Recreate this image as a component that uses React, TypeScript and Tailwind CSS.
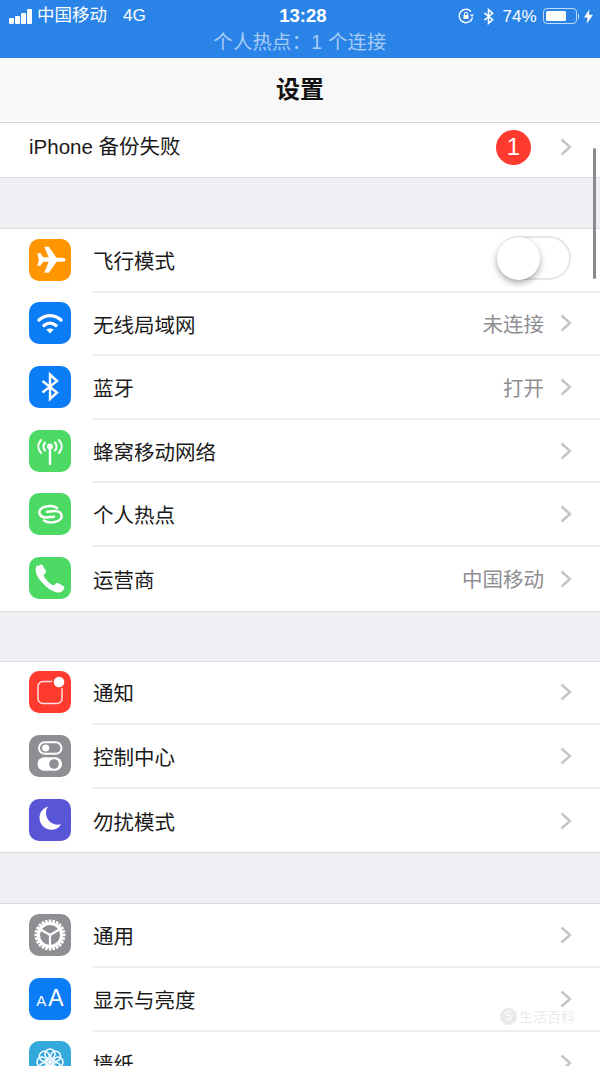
import React from 'react';

const FONT = "font-['Liberation_Sans','Noto_Sans_CJK_SC',sans-serif]";

const Chevron = () => (
  <svg viewBox="0 0 12 18" className="w-[12px] h-[18px] shrink-0" fill="none" stroke="#c4c4c7" strokeWidth="2.400">
    <path d="M1.500 1.500L10 9l-8.500 7.500" />
  </svg>
);

const Plane = () => (
  <svg viewBox="0 0 42 42" className="w-[42px] h-[42px]">
    <path
      fill="#fff"
      d="M8.300 14.300h3l3 4h5.400L15.300 7.700h4.600l7.600 11h5.500c2.200 0 3.500.9 3.500 2s-1.300 2-3.500 2h-5.500l-7.600 11h-4.600l4.400-11h-5.400l-3 4h-3l1.500-6z"
    />
  </svg>
);

const Wifi = () => (
  <svg viewBox="0 0 42 42" className="w-[42px] h-[42px]" fill="none" stroke="#fff" strokeLinecap="round">
    <path strokeWidth="3.400" d="M10 18c6.500-5.800 15.500-5.800 22 0" />
    <path strokeWidth="3.400" d="M15 23.500c3.600-3.100 8.400-3.100 12 0" />
    <path fill="#fff" stroke="none" d="M17.300 27.500c2.200-1.500 5.200-1.500 7.400 0L21 31.500z" />
  </svg>
);

const Bluetooth = () => (
  <svg viewBox="0 0 42 42" className="w-[42px] h-[42px]" fill="none" stroke="#fff" strokeWidth="2.400">
    <path d="M13.500 15l14.500 11.500-7 6.500V8.500l7 6.500-14.500 11.500" />
  </svg>
);

const Antenna = () => (
  <svg viewBox="0 0 42 42" className="w-[42px] h-[42px]" fill="none" stroke="#fff" strokeWidth="2.100" strokeLinecap="round">
    <circle cx="21" cy="16.500" r="3" fill="#fff" stroke="none" />
    <path strokeWidth="2.400" d="M21 18v16" />
    <path d="M16 12.500c-2 2.500-2 5.500 0 8M26 12.500c2 2.500 2 5.500 0 8" />
    <path d="M12 10c-3.500 4-3.500 9 0 13M30 10c3.500 4 3.500 9 0 13" />
  </svg>
);

const Hotspot = () => (
  <svg viewBox="0 0 42 42" className="w-[42px] h-[42px]" fill="none" stroke="#fff" strokeWidth="2.500" strokeLinecap="round">
    <path d="M28 15c-3-2.200-7-2.300-11-1.400-5 1-7.300 3.800-6.500 6.800.9 3.400 5 4.400 9 3.900l5.500-.6" />
    <path d="M15 27.500c3 2.200 7 2.300 11 1.400 5-1 7.300-3.800 6.500-6.800-.9-3.400-5-4.400-9-3.900l-5.500.6" />
  </svg>
);

const Phone = () => (
  <svg viewBox="0 0 42 42" className="w-[42px] h-[42px]">
    <path
      fill="#fff"
      d="M9 9.500c1.500-1.500 3.500-2.500 4.500-1.500l3.500 6c.5 1-.5 2-1.500 3-1 1-.8 2 .2 3.500 1.500 2.500 4 5 6.800 7 1.500 1 2.500 1 3.500 0 1-1 2-2 3-1.500l6 3.500c1 1 0 3-1.500 4.500-2 2-5 2-8.500.5-4-1.700-8-4.500-11-8-3.500-3.500-6-7-7-11-.8-3-.5-5.500 1.500-7.500z"
    />
  </svg>
);

const Notify = () => (
  <svg viewBox="0 0 42 42" className="w-[42px] h-[42px]">
    <rect x="9" y="10.500" width="24" height="22" rx="5" fill="none" stroke="#fff" strokeOpacity="0.85" strokeWidth="1.500" />
    <circle cx="30" cy="11" r="7" fill="#ff3b30" />
    <circle cx="30" cy="11" r="5.300" fill="#fff" />
  </svg>
);

const Toggles = () => (
  <svg viewBox="0 0 42 42" className="w-[42px] h-[42px]">
    <rect x="10" y="7.300" width="22.500" height="11.500" rx="5.750" fill="none" stroke="#fff" strokeWidth="2" />
    <circle cx="16.700" cy="13" r="3.600" fill="#fff" />
    <rect x="8.500" y="22.300" width="24.500" height="13.400" rx="6.700" fill="#fff" />
    <circle cx="25" cy="29" r="4.800" fill="#8e8e93" />
  </svg>
);

const Moon = () => (
  <svg viewBox="0 0 42 42" className="w-[42px] h-[42px]">
    <path
      fill="#fff"
      d="M19 7.500c-5.500 1.500-8.500 6.500-8.500 11.500 0 6.500 5.500 11.800 12 11.800 4.200 0 7.800-2.200 9.500-5.500-1 .3-2 .4-3 .4-7 0-12-5.500-12-11.500 0-2.700.7-4.900 2-6.700z"
    />
  </svg>
);

const Gear = () => {
  const teeth = Array.from({ length: 24 }, (_, i) => i * 15);
  return (
    <svg viewBox="0 0 42 42" className="w-[42px] h-[42px]" fill="none" stroke="#fff">
      {teeth.map(a => (
        <rect key={a} x="19.700" y="5.500" width="2.600" height="5" fill="#fff" stroke="none" transform={`rotate(${a} 21 21)`} />
      ))}
      <circle cx="21" cy="21" r="11.500" strokeWidth="3" />
      <path strokeWidth="2.200" d="M21 21v11M21 21l-9.500-5.500M21 21l9.500-5.500" />
    </svg>
  );
};

const TextSize = () => (
  <div className="flex items-baseline justify-center w-[42px] text-white font-['Liberation_Sans',sans-serif]">
    <span className="text-[15px] leading-none mr-[2px]">A</span>
    <span className="text-[23px] leading-none">A</span>
  </div>
);

const Flower = () => {
  const petals = Array.from({ length: 8 }, (_, i) => i * 45);
  return (
    <svg viewBox="0 0 42 42" className="w-[42px] h-[42px]" fill="none" stroke="#fff" strokeWidth="1.500">
      {petals.map(a => (
        <circle key={a} cx="21" cy="13" r="5" transform={`rotate(${a} 21 21)`} />
      ))}
      <circle cx="21" cy="21" r="2" fill="#fff" stroke="none" />
    </svg>
  );
};

type RowData = {
  label: string;
  color: string;
  icon: React.ReactNode;
  value?: string;
  toggle?: boolean;
};

const Row = ({ item, last }: { item: RowData; last: boolean }) => (
  <div className="flex items-center h-[63.600px] pl-[29px]">
    <div className={`w-[42px] h-[42px] mb-[2px] rounded-[10px] flex items-center justify-center shrink-0 overflow-hidden ${item.color}`}>
      {item.icon}
    </div>
    <div className={`ml-[22px] flex-1 h-full flex items-center pr-[28px] ${last ? '' : 'border-b-2 border-[#ededee]'}`}>
      <span className="text-[20.500px] text-[#1a1a1a] flex-1 pt-[5px]">{item.label}</span>
      {item.toggle ? (
        <div className="relative w-[74px] h-[44px] mb-[3px] -ml-[1px] mr-[1px] rounded-full border-2 border-[#e6e6e6] bg-white">
          <div className="absolute -left-[2px] -top-[1px] w-[43px] h-[43px] rounded-full bg-white shadow-[0_3px_6px_rgba(0,0,0,0.35)]" />
        </div>
      ) : (
        <>
          {item.value && <span className="text-[20.500px] text-[#8e8e93] mr-[16px] pt-[4px]">{item.value}</span>}
          <Chevron />
        </>
      )}
    </div>
  </div>
);

const Group = ({ items }: { items: RowData[] }) => (
  <div className="bg-white border-y border-[#dcdce0]">
    {items.map((item, i) => (
      <Row key={item.label} item={item} last={i === items.length - 1} />
    ))}
  </div>
);

const network: RowData[] = [
  { label: '飞行模式', color: 'bg-[#ff9500]', icon: <Plane />, toggle: true },
  { label: '无线局域网', color: 'bg-[#0a7cf5]', icon: <Wifi />, value: '未连接' },
  { label: '蓝牙', color: 'bg-[#0a7cf5]', icon: <Bluetooth />, value: '打开' },
  { label: '蜂窝移动网络', color: 'bg-[#4cd964]', icon: <Antenna /> },
  { label: '个人热点', color: 'bg-[#4cd964]', icon: <Hotspot /> },
  { label: '运营商', color: 'bg-[#4cd964]', icon: <Phone />, value: '中国移动' },
];

const alerts: RowData[] = [
  { label: '通知', color: 'bg-[#ff3b30]', icon: <Notify /> },
  { label: '控制中心', color: 'bg-[#8e8e93]', icon: <Toggles /> },
  { label: '勿扰模式', color: 'bg-[#5856d6]', icon: <Moon /> },
];

const general: RowData[] = [
  { label: '通用', color: 'bg-[#8e8e93]', icon: <Gear /> },
  { label: '显示与亮度', color: 'bg-[#0a7cf5]', icon: <TextSize /> },
  { label: '墙纸', color: 'bg-[#34aadc]', icon: <Flower /> },
];

const StatusBar = () => (
  <div className="bg-[#2a84e8] h-[58px] text-white shrink-0 overflow-hidden">
    <div className="flex items-center h-[31px] pl-[9px] pr-[7px] pt-[1px]">
      <div className="flex items-end gap-[1.500px] h-[15px] w-[24px]">
        <span className="w-[4.500px] h-[6px] bg-white rounded-[1px]" />
        <span className="w-[4.500px] h-[8px] bg-white rounded-[1px]" />
        <span className="w-[4.500px] h-[11px] bg-white rounded-[1px]" />
        <span className="w-[4.500px] h-[15px] bg-white rounded-[1px]" />
      </div>
      <span className="ml-[4px] text-[17.500px] leading-none">中国移动</span>
      <span className="ml-[16px] text-[17.200px] leading-none">4G</span>
      <span className="ml-[133px] w-[48px] text-center text-[18.500px] font-semibold leading-none">13:28</span>
      <span className="flex-1" />
      <svg viewBox="0 0 16 16" className="w-[16px] h-[16px] mr-[9px]" fill="none" stroke="#fff" strokeWidth="1.400">
        <path d="M14.500 9.500A6.700 6.700 0 1 1 13 3.500" />
        <path fill="#fff" stroke="none" d="M12 6.500h4l-2 2.500z" />
        <rect x="5.500" y="7" width="5" height="4" fill="#fff" stroke="none" />
        <path strokeWidth="1.100" d="M6.500 7V5.800a1.500 1.500 0 0 1 3 0V7" />
      </svg>
      <svg viewBox="0 0 12 18" className="w-[11px] h-[17px] mr-[8px]" fill="none" stroke="#fff" strokeWidth="1.700">
        <path d="M1.500 5l9 7.500-4.500 4V1.500l4.500 4-9 7.500" />
      </svg>
      <span className="text-[17px] leading-none mr-[6px]">74%</span>
      <div className="w-[34px] h-[16px] rounded-[4px] border border-white/70 p-[2px]">
        <div className="h-full w-[72%] bg-white rounded-[1.500px]" />
      </div>
      <span className="w-[1.500px] h-[5px] ml-[1px] bg-white/70" />
      <svg viewBox="0 0 10 16" className="w-[9px] h-[15px] ml-[5px]" fill="#fff">
        <path d="M6 0L0 9h4l-1 7 7-10H5.500z" />
      </svg>
    </div>
    <div className="text-center text-[19.300px] leading-[24px] text-white/60 tracking-[0.3px]">个人热点：1 个连接</div>
  </div>
);

export default function App() {
  return (
    <div className={`relative w-[600px] h-[1066px] overflow-hidden bg-[#efeff4] flex flex-col ${FONT}`}>
      <StatusBar />
      <div className="h-[65px] shrink-0 bg-[#f8f8f8] flex items-center justify-center border-b border-[#d4d4d6]">
        <span className="text-[24px] font-bold text-[#111]">设置</span>
      </div>
      <div className="bg-white h-[55px] shrink-0 flex items-center pl-[29px] pr-[28px] pb-[6px] border-b border-[#dcdce0]">
        <span className="flex-1 text-[20.500px] text-[#1a1a1a]">iPhone 备份失败</span>
        <span className="w-[35px] h-[35px] mr-[29px] rounded-full bg-[#ff3b30] text-white text-[24px] flex items-center justify-center">1</span>
        <Chevron />
      </div>
      <div className="h-[50px] shrink-0" />
      <Group items={network} />
      <div className="h-[49px] shrink-0" />
      <Group items={alerts} />
      <div className="h-[50px] shrink-0" />
      <Group items={general} />

      {/* scroll indicator */}
      <div className="absolute right-[4px] top-[148px] w-[3.500px] h-[131px] rounded-full bg-[#8a8a90]" />
      {/* watermark */}
      <div className="absolute left-[500px] top-[1008px] flex items-center gap-[2px] opacity-20">
        <span className="w-[17px] h-[17px] rounded-full bg-[#999] text-white text-[12px] leading-[17px] text-center">S</span>
        <span className="text-[14px] leading-none text-[#999]">生活百科</span>
      </div>
    </div>
  );
}
